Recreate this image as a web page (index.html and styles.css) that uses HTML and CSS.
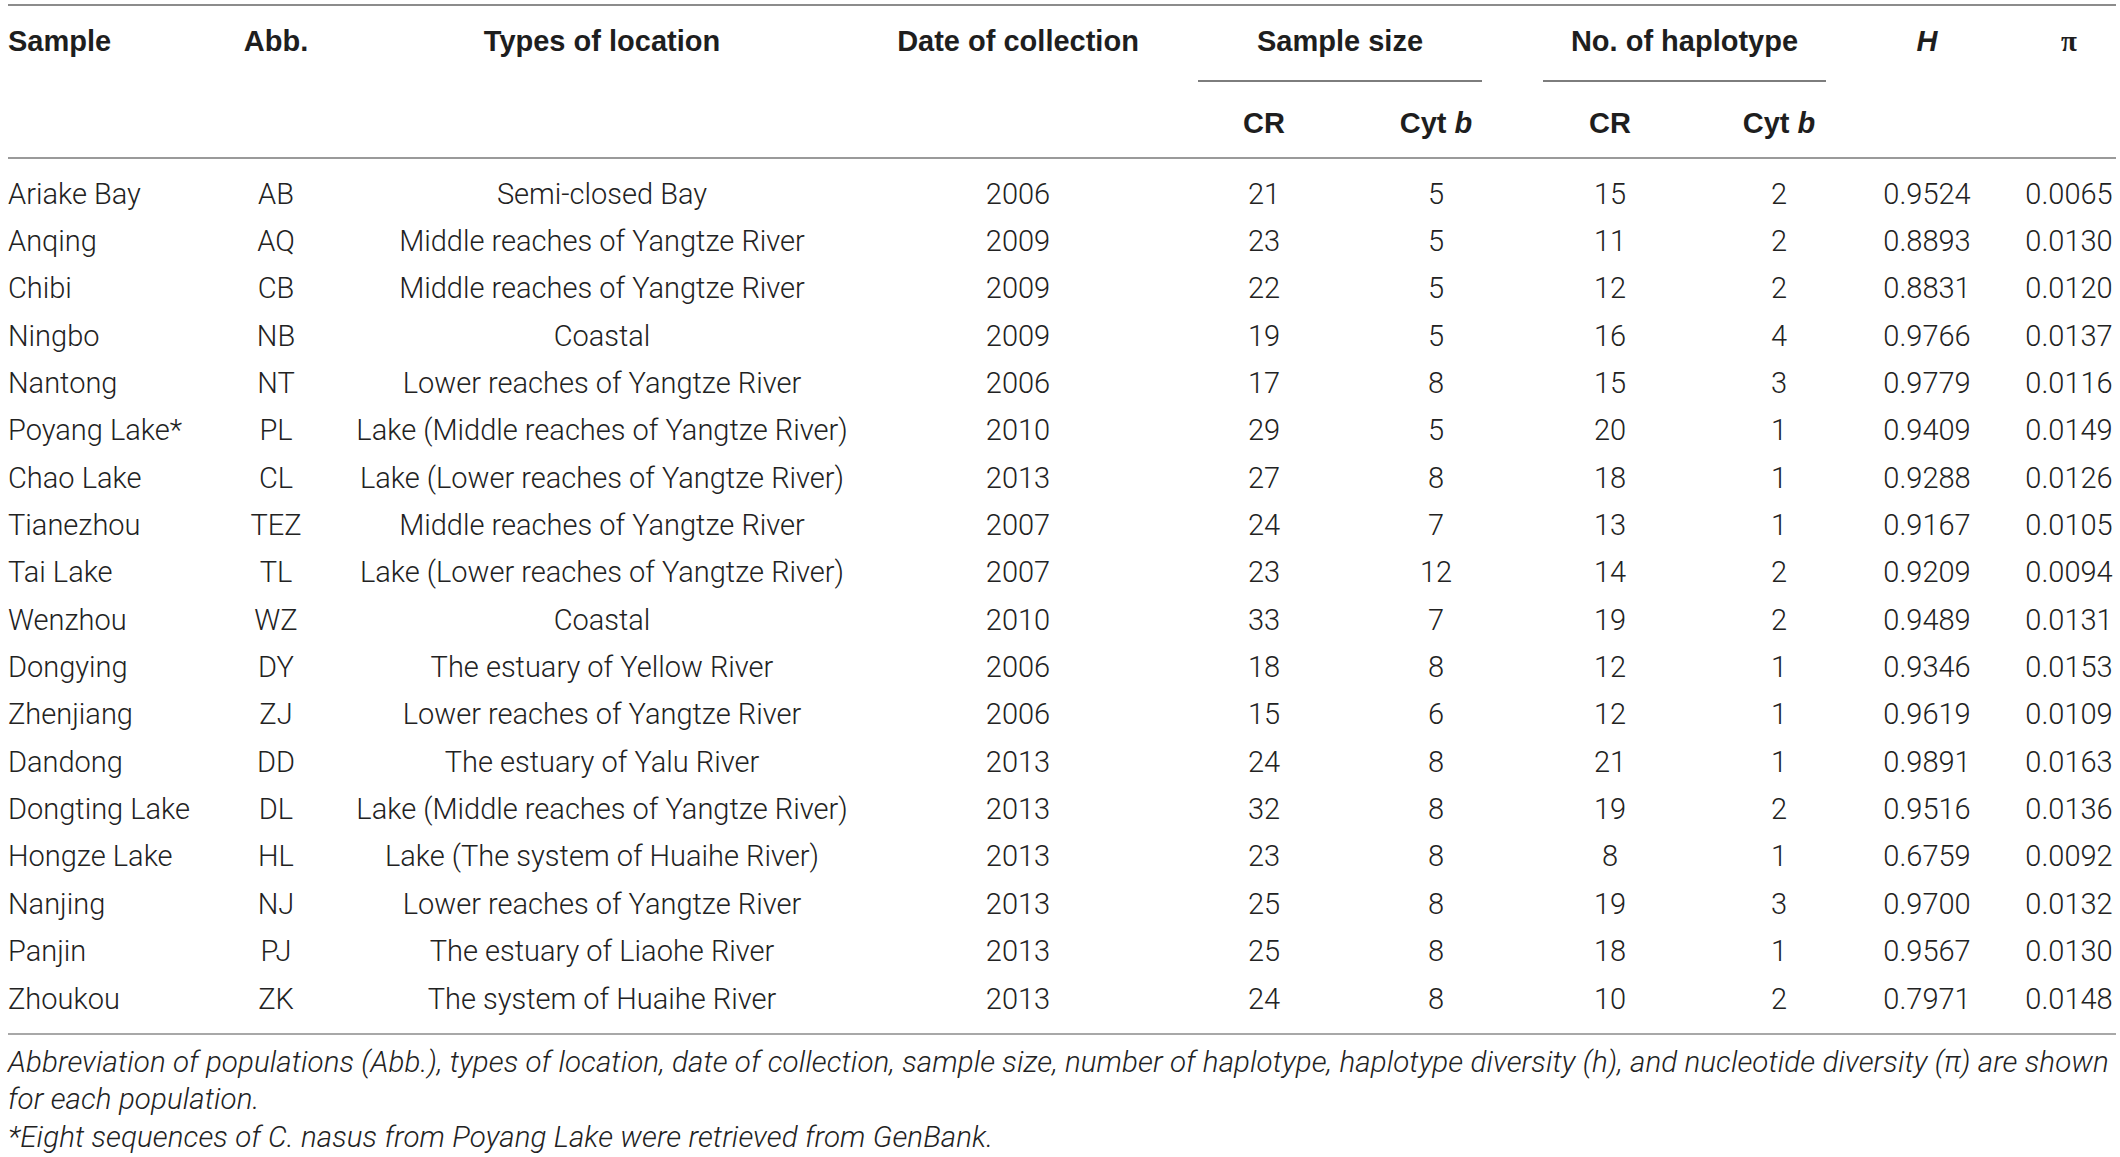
FILE: index.html
```html
<!DOCTYPE html>
<html lang="en">
<head>
<meta charset="utf-8">
<title>Table</title>
<link rel="stylesheet" href="styles.css">
</head>
<body>
<div class="wrap">
<table class="tbl">
  <colgroup>
    <col class="c-sample">
    <col class="c-abb">
    <col class="c-type">
    <col class="c-date">
    <col class="c-cr1">
    <col class="c-cyt1">
    <col class="c-cr2">
    <col class="c-cyt2">
    <col class="c-h">
    <col class="c-pi">
  </colgroup>
  <thead>
    <tr class="hr1">
      <th rowspan="2" class="left top">Sample</th>
      <th rowspan="2" class="top">Abb.</th>
      <th rowspan="2" class="top">Types of location</th>
      <th rowspan="2" class="top">Date of collection</th>
      <th colspan="2" class="grp"><div class="grp-label grp-a">Sample size</div></th>
      <th colspan="2" class="grp"><div class="grp-label grp-b">No. of haplotype</div></th>
      <th rowspan="2" class="top"><i>H</i></th>
      <th rowspan="2" class="top pi-h"><span class="sym">π</span></th>
    </tr>
    <tr class="hr2">
      <th>CR</th>
      <th>Cyt <i>b</i></th>
      <th>CR</th>
      <th>Cyt <i>b</i></th>
    </tr>
  </thead>
  <tbody>
    <tr><td class="left">Ariake Bay</td><td>AB</td><td>Semi-closed Bay</td><td>2006</td><td>21</td><td>5</td><td>15</td><td>2</td><td>0.9524</td><td class="pi">0.0065</td></tr>
    <tr><td class="left">Anqing</td><td>AQ</td><td>Middle reaches of Yangtze River</td><td>2009</td><td>23</td><td>5</td><td>11</td><td>2</td><td>0.8893</td><td class="pi">0.0130</td></tr>
    <tr><td class="left">Chibi</td><td>CB</td><td>Middle reaches of Yangtze River</td><td>2009</td><td>22</td><td>5</td><td>12</td><td>2</td><td>0.8831</td><td class="pi">0.0120</td></tr>
    <tr><td class="left">Ningbo</td><td>NB</td><td>Coastal</td><td>2009</td><td>19</td><td>5</td><td>16</td><td>4</td><td>0.9766</td><td class="pi">0.0137</td></tr>
    <tr><td class="left">Nantong</td><td>NT</td><td>Lower reaches of Yangtze River</td><td>2006</td><td>17</td><td>8</td><td>15</td><td>3</td><td>0.9779</td><td class="pi">0.0116</td></tr>
    <tr><td class="left">Poyang Lake*</td><td>PL</td><td>Lake (Middle reaches of Yangtze River)</td><td>2010</td><td>29</td><td>5</td><td>20</td><td>1</td><td>0.9409</td><td class="pi">0.0149</td></tr>
    <tr><td class="left">Chao Lake</td><td>CL</td><td>Lake (Lower reaches of Yangtze River)</td><td>2013</td><td>27</td><td>8</td><td>18</td><td>1</td><td>0.9288</td><td class="pi">0.0126</td></tr>
    <tr><td class="left">Tianezhou</td><td>TEZ</td><td>Middle reaches of Yangtze River</td><td>2007</td><td>24</td><td>7</td><td>13</td><td>1</td><td>0.9167</td><td class="pi">0.0105</td></tr>
    <tr><td class="left">Tai Lake</td><td>TL</td><td>Lake (Lower reaches of Yangtze River)</td><td>2007</td><td>23</td><td>12</td><td>14</td><td>2</td><td>0.9209</td><td class="pi">0.0094</td></tr>
    <tr><td class="left">Wenzhou</td><td>WZ</td><td>Coastal</td><td>2010</td><td>33</td><td>7</td><td>19</td><td>2</td><td>0.9489</td><td class="pi">0.0131</td></tr>
    <tr><td class="left">Dongying</td><td>DY</td><td>The estuary of Yellow River</td><td>2006</td><td>18</td><td>8</td><td>12</td><td>1</td><td>0.9346</td><td class="pi">0.0153</td></tr>
    <tr><td class="left">Zhenjiang</td><td>ZJ</td><td>Lower reaches of Yangtze River</td><td>2006</td><td>15</td><td>6</td><td>12</td><td>1</td><td>0.9619</td><td class="pi">0.0109</td></tr>
    <tr><td class="left">Dandong</td><td>DD</td><td>The estuary of Yalu River</td><td>2013</td><td>24</td><td>8</td><td>21</td><td>1</td><td>0.9891</td><td class="pi">0.0163</td></tr>
    <tr><td class="left">Dongting Lake</td><td>DL</td><td>Lake (Middle reaches of Yangtze River)</td><td>2013</td><td>32</td><td>8</td><td>19</td><td>2</td><td>0.9516</td><td class="pi">0.0136</td></tr>
    <tr><td class="left">Hongze Lake</td><td>HL</td><td>Lake (The system of Huaihe River)</td><td>2013</td><td>23</td><td>8</td><td>8</td><td>1</td><td>0.6759</td><td class="pi">0.0092</td></tr>
    <tr><td class="left">Nanjing</td><td>NJ</td><td>Lower reaches of Yangtze River</td><td>2013</td><td>25</td><td>8</td><td>19</td><td>3</td><td>0.9700</td><td class="pi">0.0132</td></tr>
    <tr><td class="left">Panjin</td><td>PJ</td><td>The estuary of Liaohe River</td><td>2013</td><td>25</td><td>8</td><td>18</td><td>1</td><td>0.9567</td><td class="pi">0.0130</td></tr>
    <tr><td class="left">Zhoukou</td><td>ZK</td><td>The system of Huaihe River</td><td>2013</td><td>24</td><td>8</td><td>10</td><td>2</td><td>0.7971</td><td class="pi">0.0148</td></tr>
  </tbody>
</table>
<div class="notes">
  <p class="note">Abbreviation of populations (Abb.), types of location, date of collection, sample size, number of haplotype, haplotype diversity (h), and nucleotide diversity (π) are shown for each population.</p>
  <p class="note">*Eight sequences of C. nasus from Poyang Lake were retrieved from GenBank.</p>
</div>
</div>
</body>
</html>
```
FILE: styles.css
```css
html, body {
  margin: 0;
  padding: 0;
  background: #ffffff;
}

.wrap {
  padding: 4px 4px 0 8px;
  width: 2108px;
  color: #222222;
  font-family: Roboto, "Liberation Sans", sans-serif;
  font-weight: 300;
  font-size: 29px;
}

.tbl {
  width: 2108px;
  table-layout: fixed;
  border-collapse: separate;
  border-spacing: 0;
}

.c-sample { width: 192px; }
.c-abb { width: 152px; }
.c-type { width: 500px; }
.c-date { width: 332px; }
.c-cr1 { width: 160px; }
.c-cyt1 { width: 184px; }
.c-cr2 { width: 164px; }
.c-cyt2 { width: 174px; }
.c-h { width: 122px; }
.c-pi { width: 128px; }

.tbl th {
  font-family: "Liberation Sans", Arial, sans-serif;
  font-weight: 700;
  font-size: 29px;
  color: #1e1e1e;
  line-height: 34px;
  text-align: center;
  white-space: nowrap;
  padding: 0;
}

.tbl th.top {
  vertical-align: top;
  padding-top: 18px;
  border-top: 2px solid #8c8c8c;
  border-bottom: 2px solid #9a9a9a;
}

.tbl th.grp {
  border-top: 2px solid #8c8c8c;
  vertical-align: top;
}

.grp-label {
  padding: 18px 0 22px;
  border-bottom: 2px solid #7d7d7d;
}

.grp-a { margin: 0 46px 0 14px; }
.grp-b { margin: 0 40px 0 15px; }

.hr2 th {
  padding: 24px 0 17px;
  border-bottom: 2px solid #9a9a9a;
}

.tbl th i {
  font-style: italic;
}

.tbl th.pi-h {
  padding-left: 34px;
}

.pi-h .sym {
  font-family: "Liberation Serif", serif;
  font-weight: 700;
  font-size: 29px;
}

.tbl .left {
  text-align: left;
}

.tbl td {
  height: 47.35px;
  padding: 0;
  line-height: 34px;
  text-align: center;
  white-space: nowrap;
  vertical-align: middle;
}

.tbl td.pi {
  padding-left: 34px;
}

.tbl tbody tr:first-child td {
  padding-top: 11px;
}

.tbl tbody tr:last-child td {
  padding-bottom: 11px;
  border-bottom: 2px solid #a8a8a8;
}

.notes {
  padding-top: 8.6px;
}

.note {
  margin: 0;
  font-style: italic;
  font-size: 29.5px;
  letter-spacing: 0.1px;
  line-height: 37.5px;
}
```
